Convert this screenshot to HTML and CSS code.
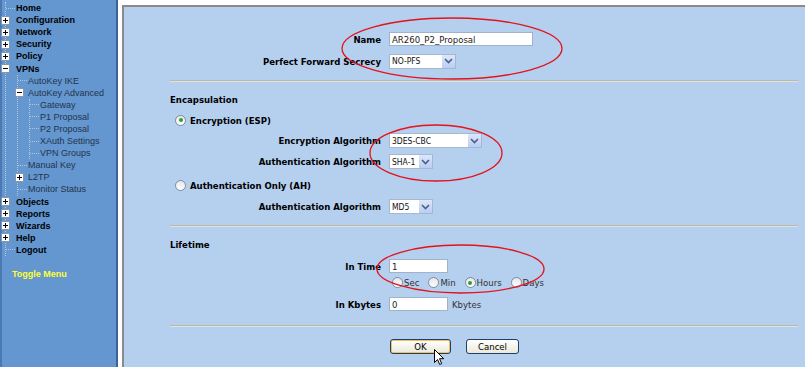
FILE: index.html
```html
<!DOCTYPE html>
<html lang="en">
<head>
    <meta charset="UTF-8">
    <title>P2 Proposal</title>
    <link rel="stylesheet" href="styles.css">
</head>
<body>
<div class="page">

    <!-- Left menu tree -->
    <nav class="sidebar">
        <ul class="tree">
            <li><div class="item top"><span class="dash"></span>Home</div></li>
            <li><div class="item top"><svg class="box" width="9" height="9" viewBox="0 0 9 9"><rect x="0.5" y="0.5" width="8" height="8" fill="#fff" stroke="#8796ab"/><path d="M2 4.5h5M4.5 2v5" stroke="#000"/></svg>Configuration</div></li>
            <li><div class="item top"><svg class="box" width="9" height="9" viewBox="0 0 9 9"><rect x="0.5" y="0.5" width="8" height="8" fill="#fff" stroke="#8796ab"/><path d="M2 4.5h5M4.5 2v5" stroke="#000"/></svg>Network</div></li>
            <li><div class="item top"><svg class="box" width="9" height="9" viewBox="0 0 9 9"><rect x="0.5" y="0.5" width="8" height="8" fill="#fff" stroke="#8796ab"/><path d="M2 4.5h5M4.5 2v5" stroke="#000"/></svg>Security</div></li>
            <li><div class="item top"><svg class="box" width="9" height="9" viewBox="0 0 9 9"><rect x="0.5" y="0.5" width="8" height="8" fill="#fff" stroke="#8796ab"/><path d="M2 4.5h5M4.5 2v5" stroke="#000"/></svg>Policy</div></li>
            <li>
                <div class="item top"><svg class="box" width="9" height="9" viewBox="0 0 9 9"><rect x="0.5" y="0.5" width="8" height="8" fill="#fff" stroke="#8796ab"/><path d="M2 4.5h5" stroke="#000"/></svg>VPNs</div>
                <ul>
                    <li><div class="item"><span class="dash"></span>AutoKey IKE</div></li>
                    <li>
                        <div class="item"><svg class="box" width="9" height="9" viewBox="0 0 9 9"><rect x="0.5" y="0.5" width="8" height="8" fill="#fff" stroke="#8796ab"/><path d="M2 4.5h5" stroke="#000"/></svg>AutoKey Advanced</div>
                        <ul>
                            <li><div class="item"><span class="dash"></span>Gateway</div></li>
                            <li><div class="item"><span class="dash"></span>P1 Proposal</div></li>
                            <li><div class="item"><span class="dash"></span>P2 Proposal</div></li>
                            <li><div class="item"><span class="dash"></span>XAuth Settings</div></li>
                            <li><div class="item"><span class="dash"></span>VPN Groups</div></li>
                        </ul>
                    </li>
                    <li><div class="item"><span class="dash"></span>Manual Key</div></li>
                    <li><div class="item"><svg class="box" width="9" height="9" viewBox="0 0 9 9"><rect x="0.5" y="0.5" width="8" height="8" fill="#fff" stroke="#8796ab"/><path d="M2 4.5h5M4.5 2v5" stroke="#000"/></svg>L2TP</div></li>
                    <li><div class="item"><span class="dash"></span>Monitor Status</div></li>
                </ul>
            </li>
            <li><div class="item top"><svg class="box" width="9" height="9" viewBox="0 0 9 9"><rect x="0.5" y="0.5" width="8" height="8" fill="#fff" stroke="#8796ab"/><path d="M2 4.5h5M4.5 2v5" stroke="#000"/></svg>Objects</div></li>
            <li><div class="item top"><svg class="box" width="9" height="9" viewBox="0 0 9 9"><rect x="0.5" y="0.5" width="8" height="8" fill="#fff" stroke="#8796ab"/><path d="M2 4.5h5M4.5 2v5" stroke="#000"/></svg>Reports</div></li>
            <li><div class="item top"><svg class="box" width="9" height="9" viewBox="0 0 9 9"><rect x="0.5" y="0.5" width="8" height="8" fill="#fff" stroke="#8796ab"/><path d="M2 4.5h5M4.5 2v5" stroke="#000"/></svg>Wizards</div></li>
            <li><div class="item top"><svg class="box" width="9" height="9" viewBox="0 0 9 9"><rect x="0.5" y="0.5" width="8" height="8" fill="#fff" stroke="#8796ab"/><path d="M2 4.5h5M4.5 2v5" stroke="#000"/></svg>Help</div></li>
            <li><div class="item top"><span class="dash"></span>Logout</div></li>
        </ul>
        <div class="toggle">Toggle Menu</div>
    </nav>

    <!-- Main form -->
    <div class="frame">
        <div class="content">
            <div class="row first">
                <span class="lbl">Name</span>
                <span class="input w-name">AR260_P2_Proposal</span>
            </div>
            <div class="row">
                <span class="lbl">Perfect Forward Secrecy</span>
                <span class="select w-pfs"><span class="val">NO-PFS</span><span class="arrow"><svg width="9" height="6" viewBox="0 0 9 6"><path d="M1 1l3.5 3.5L8 1" fill="none" stroke="#4a5f86" stroke-width="1.6"/></svg></span></span>
            </div>

            <div class="sep"></div>

            <div class="heading">Encapsulation</div>
            <div class="choice"><span class="radio on"></span>Encryption (ESP)</div>
            <div class="row r21">
                <span class="lbl">Encryption Algorithm</span>
                <span class="select w-enc"><span class="val">3DES-CBC</span><span class="arrow"><svg width="9" height="6" viewBox="0 0 9 6"><path d="M1 1l3.5 3.5L8 1" fill="none" stroke="#4a5f86" stroke-width="1.6"/></svg></span></span>
            </div>
            <div class="row r21">
                <span class="lbl">Authentication Algorithm</span>
                <span class="select w-auth"><span class="val">SHA-1</span><span class="arrow"><svg width="9" height="6" viewBox="0 0 9 6"><path d="M1 1l3.5 3.5L8 1" fill="none" stroke="#4a5f86" stroke-width="1.6"/></svg></span></span>
            </div>
            <div class="choice ah"><span class="radio"></span>Authentication Only (AH)</div>
            <div class="row r21">
                <span class="lbl">Authentication Algorithm</span>
                <span class="select w-auth"><span class="val">MD5</span><span class="arrow"><svg width="9" height="6" viewBox="0 0 9 6"><path d="M1 1l3.5 3.5L8 1" fill="none" stroke="#4a5f86" stroke-width="1.6"/></svg></span></span>
            </div>

            <div class="sep"></div>

            <div class="heading">Lifetime</div>
            <div class="row time">
                <span class="lbl">In Time</span>
                <span class="input w-short">1</span>
            </div>
            <div class="units">
                <span class="opt"><span class="radio"></span>Sec</span>
                <span class="opt"><span class="radio"></span>Min</span>
                <span class="opt"><span class="radio on"></span>Hours</span>
                <span class="opt"><span class="radio"></span>Days</span>
            </div>
            <div class="row kb">
                <span class="lbl">In Kbytes</span>
                <span class="input w-short">0</span>
                <span class="unit">Kbytes</span>
            </div>

            <div class="sep last"></div>

            <div class="buttons">
                <button class="btn ok">OK</button>
                <button class="btn cancel">Cancel</button>
            </div>
        </div>
    </div>

    <!-- annotations drawn over the screenshot -->
    <svg class="marks" width="805" height="367" viewBox="0 0 805 367">
        <ellipse cx="452" cy="48.5" rx="110" ry="30.5" fill="none" stroke="#e3121c" stroke-width="1.3"/>
        <ellipse cx="436" cy="153" rx="66" ry="28" fill="none" stroke="#e3121c" stroke-width="1.3"/>
        <ellipse cx="460.5" cy="269" rx="83.5" ry="24" fill="none" stroke="#e3121c" stroke-width="1.3"/>
    </svg>
    <svg class="cursor" width="11" height="17" viewBox="0 0 11 17">
        <path d="M0.5 0.5v13l3-3 2.2 5 2-0.9-2.2-4.9h4.2z" fill="#fff" stroke="#000" stroke-width="1"/>
    </svg>
</div>
</body>
</html>
```

FILE: styles.css
```css
body {
    margin: 0;
    background: #fff;
    font-family: "DejaVu Sans Condensed", "DejaVu Sans", sans-serif;
}
.page {
    position: relative;
    display: flex;
    width: 805px;
    height: 367px;
    overflow: hidden;
}

/* sidebar */
.sidebar {
    flex: none;
    width: 114px;
    padding-top: 2px;
    background: #6496d0;
    border-left: 2px solid #4a79b4;
    border-right: 2px solid #3d6394;
    font-family: "Liberation Sans", Arial, sans-serif;
    font-size: 9px;
}
.tree, .tree ul {
    list-style: none;
    margin: 0 0 0 3px;
    padding: 0;
    border-left: 1px dotted #b3c6de;
}
.tree ul {
    margin-left: 11px;
}
.item {
    display: flex;
    align-items: center;
    height: 12.1px;
    white-space: nowrap;
    color: #23354b;
}
.item.top {
    font-weight: bold;
    color: #000;
}
.dash {
    width: 9px;
    margin-right: 1px;
    border-top: 1px dotted #b3c6de;
}
.box {
    flex: none;
    margin-left: -5px;
    margin-right: 6px;
}
.tree ul .box {
    margin-left: -3px;
    margin-right: 4px;
}
.toggle {
    margin-top: 12px;
    height: 12px;
    line-height: 12px;
    padding-left: 10px;
    color: #ffff33;
    font-weight: bold;
}

/* main frame */
.frame {
    flex: 1;
    padding: 5px 0 0 4px;
    background: #fff;
}
.content {
    height: 100%;
    padding-top: 21px;
    background: #b5cfef;
    border-top: 2px solid #8a8a8a;
    border-left: 2px solid #8a8a8a;
    box-sizing: border-box;
    font-size: 9.5px;
    color: #000;
}
.row {
    display: flex;
    align-items: center;
    height: 22px;
}
.row.r21 {
    height: 21px;
}
.row.time {
    height: 20px;
    margin-top: 1px;
}
.row.kb {
    margin-top: 4px;
}
.lbl {
    flex: none;
    width: 265px;
    padding-right: 8px;
    box-sizing: border-box;
    text-align: right;
    font-weight: bold;
}
.input {
    display: flex;
    align-items: center;
    height: 14px;
    padding-left: 2px;
    box-sizing: border-box;
    background: #fff;
    border: 1px solid #9fb4cc;
    color: #222;
    font-size: 9.5px;
}
.w-name { width: 144px; }
.w-short { width: 59px; }
.unit {
    margin-left: 4px;
    color: #333;
}
.select {
    display: flex;
    align-items: center;
    justify-content: space-between;
    height: 15px;
    box-sizing: border-box;
    background: #fff;
    border: 1px solid #a6b8ce;
    font-size: 8.5px;
    color: #111;
}
.select .val {
    padding-left: 2px;
}
.select .arrow {
    display: flex;
    align-items: center;
    justify-content: center;
    width: 13px;
    height: 13px;
    background: linear-gradient(#dde7fb, #b9cdf4);
}
.w-pfs { width: 67px; }
.w-enc { width: 93px; }
.w-auth { width: 44px; }

.sep {
    height: 1px;
    margin: 8px 7px 0 46px;
    background: #c6b796;
    border-bottom: 1px solid #d6e3f3;
}
.sep.last {
    margin-top: 10px;
}
.heading {
    height: 20px;
    line-height: 20px;
    margin-top: 8px;
    padding-left: 46px;
    font-weight: bold;
}
.choice {
    display: flex;
    align-items: center;
    height: 20px;
    padding-left: 51px;
    font-weight: bold;
}
.choice.ah {
    height: 22px;
    margin-top: 2px;
}
.choice .radio {
    margin-right: 4px;
}
.radio {
    display: inline-flex;
    align-items: center;
    justify-content: center;
    width: 11px;
    height: 11px;
    box-sizing: border-box;
    border: 1px solid #7b8ca3;
    border-radius: 50%;
    background: linear-gradient(#e6e6e6, #fff);
}
.radio.on::after {
    content: "";
    width: 4px;
    height: 4px;
    border-radius: 50%;
    background: #2ea02e;
}
.units {
    display: flex;
    align-items: center;
    height: 13px;
    padding-left: 268px;
    color: #333;
}
.opt {
    display: flex;
    align-items: center;
    margin-right: 9px;
}
.opt .radio {
    margin-right: 1px;
}

.buttons {
    display: flex;
    gap: 15px;
    margin-top: 12px;
    padding-left: 266px;
}
.btn {
    height: 15px;
    padding: 0;
    border: 1px solid #1d3f6c;
    border-radius: 3px;
    background: linear-gradient(#fff, #ece9d8);
    font-family: "DejaVu Sans Condensed", "DejaVu Sans", sans-serif;
    font-size: 9.5px;
    color: #000;
}
.btn.ok {
    width: 61px;
    box-shadow: inset 0 0 0 1px #f6c15a;
}
.btn.cancel {
    width: 53px;
}

/* overlays */
.marks {
    position: absolute;
    top: 0;
    left: 0;
    pointer-events: none;
}
.cursor {
    position: absolute;
    left: 434px;
    top: 349px;
}
```
